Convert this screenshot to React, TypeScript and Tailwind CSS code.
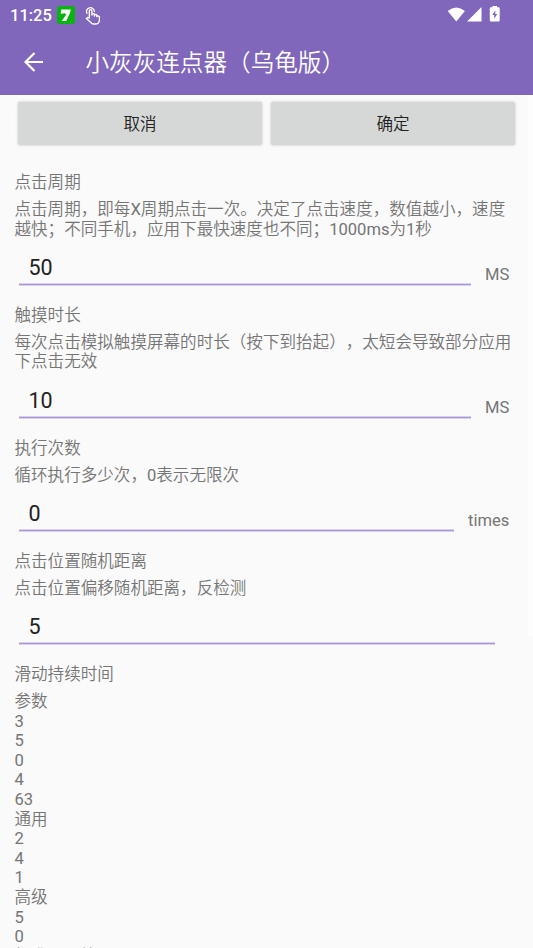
import React from "react";

type FieldProps = {
  title: string;
  lines: string[];
  value: string;
  unit?: string;
  width: string;
  height: string;
};

function Field({ title, lines, value, unit, width, height }: FieldProps) {
  return (
    <section className={`${height} shrink-0`}>
      <h2 className="mb-[7.5px] h-[19.6px] whitespace-nowrap">{title}</h2>
      {lines.map((line) => (
        <p key={line} className="h-[19.6px] whitespace-nowrap">{line}</p>
      ))}
      <div className="mt-[10px] flex">
        <div className={`${width} ml-[4.5px] h-[36px] shrink-0 border-b border-[#a996dc] pl-[9.5px] text-[21.5px] leading-[38px] text-[#212121] shadow-[0_1px_0_#d9d0ee,inset_0_-1px_0_#d9d0ee]`}>
          {value}
        </div>
        {unit && <span className="ml-[14px] mt-[16px]">{unit}</span>}
      </div>
    </section>
  );
}

const fields: FieldProps[] = [
  {
    title: "点击周期",
    lines: [
      "点击周期，即每X周期点击一次。决定了点击速度，数值越小，速度",
      "越快；不同手机，应用下最快速度也不同；1000ms为1秒",
    ],
    value: "50",
    unit: "MS",
    width: "w-[452px]",
    height: "h-[132.8px]",
  },
  {
    title: "触摸时长",
    lines: ["每次点击模拟触摸屏幕的时长（按下到抬起），太短会导致部分应用", "下点击无效"],
    value: "10",
    unit: "MS",
    width: "w-[452px]",
    height: "h-[132.8px]",
  },
  { title: "执行次数", lines: ["循环执行多少次，0表示无限次"], value: "0", unit: "times", width: "w-[435px]", height: "h-[113.2px]" },
  { title: "点击位置随机距离", lines: ["点击位置偏移随机距离，反检测"], value: "5", width: "w-[476px]", height: "h-[113.2px]" },
];

const params = ["参数", "3", "5", "0", "4", "63", "通用", "2", "4", "1", "高级", "5", "0", "标准、、算"];

export default function App() {
  return (
    <div className="relative flex h-[948px] w-[533px] flex-col overflow-hidden bg-[#fafafa] font-[Roboto,'Noto_Sans_CJK_SC_DemiLight','Noto_Sans_CJK_SC_Light','Noto_Sans_CJK_SC',sans-serif] text-[16.57px] leading-[19.6px] text-[#757575] [text-spacing-trim:space-all]">
      <header className="h-[95px] shrink-0 bg-[#8067bc] text-white">
        <div className="flex h-[30px] items-center pl-[10px]">
          <span className="w-[47px] pt-px text-[16.5px] font-medium">11:25</span>
          <svg className="h-[18px] w-[18px]" viewBox="0 0 18 18">
            <rect width="18" height="18" rx="2.5" fill="#08b312" />
            <path d="M4.2 3.6H13.8L13.2 6.6L9.2 15H4.8L9.3 8.5L7.8 7.3L3.7 7.8Z" fill="#fff" />
          </svg>
          <svg className="ml-[10px] h-[19px] w-[16px]" viewBox="0 0 16 19" fill="none" stroke="#fff" strokeWidth="1.3" strokeLinejoin="round" strokeLinecap="round">
            <path d="M2 7.5A3.9 3.9 0 1 1 9.3 5.5M4.3 12V5a1.3 1.3 0 0 1 2.6 0V9.2V8.1q1.5-.9 2.5 0V10V8.8q1.6-.7 2.4.3V10.7V9.9q2-.3 2.6.9V14q-.3 4-3.4 4H8.2q-1.2-.1-2-1.2L1.3 12.5q.9-1.7 3-.5" />
          </svg>
          <svg className="ml-auto mr-[32px] h-[18px] w-[54px]" viewBox="0 0 54 18" fill="#fff">
            <path d="M.7 5Q9.3-2 17.9 5L9.3 15.6ZM34.5 1V15.5H20Z" />
            <path fillRule="evenodd" d="M45.5 1.3V0H50V1.3H51.7Q52.7 1.3 52.7 2.3V14.4Q52.7 15.4 51.7 15.4H43.8Q42.8 15.4 42.8 14.4V2.3Q42.8 1.3 43.8 1.3ZM48.3 4.5L45.2 9H47.2V12.8L50.3 8H48.3Z" />
          </svg>
        </div>
        <div className="flex h-[65px] items-center pl-[24px]">
          <svg className="mb-[2px] h-[20px] w-[20px]" viewBox="0 0 20 20" fill="none" stroke="#fff" strokeWidth="2.2">
            <path d="M19 10H1.5M10.5 1L1.5 10L10.5 19" />
          </svg>
          <h1 className="ml-[41.5px] whitespace-nowrap text-[23.6px] leading-8">小灰灰连点器（乌龟版）</h1>
        </div>
      </header>
      <div className="flex shrink-0 gap-[9px] pl-[18px] pt-[7px] text-[#212121]">
        <button className="h-[43px] w-[244px] rounded-[2px] bg-[#d6d8d7] pt-[2px] shadow-[0_0_3px_rgba(0,0,0,0.22)]">取消</button>
        <button className="h-[43px] w-[244px] rounded-[2px] bg-[#d6d8d7] pt-[2px] shadow-[0_0_3px_rgba(0,0,0,0.22)]">确定</button>
      </div>
      <main className="flex flex-col pl-[14.5px] pt-[28px]">
        {fields.map((field) => (
          <Field key={field.title} {...field} />
        ))}
        <h2 className="mb-[7.5px] h-[19.6px] shrink-0">滑动持续时间</h2>
        {params.map((param, i) => (
          <p key={i} className="h-[19.6px] shrink-0">{param}</p>
        ))}
      </main>
      <div className="absolute right-0 top-[95px] h-[541px] w-[5px] bg-[#fdfdfd]" />
    </div>
  );
}
